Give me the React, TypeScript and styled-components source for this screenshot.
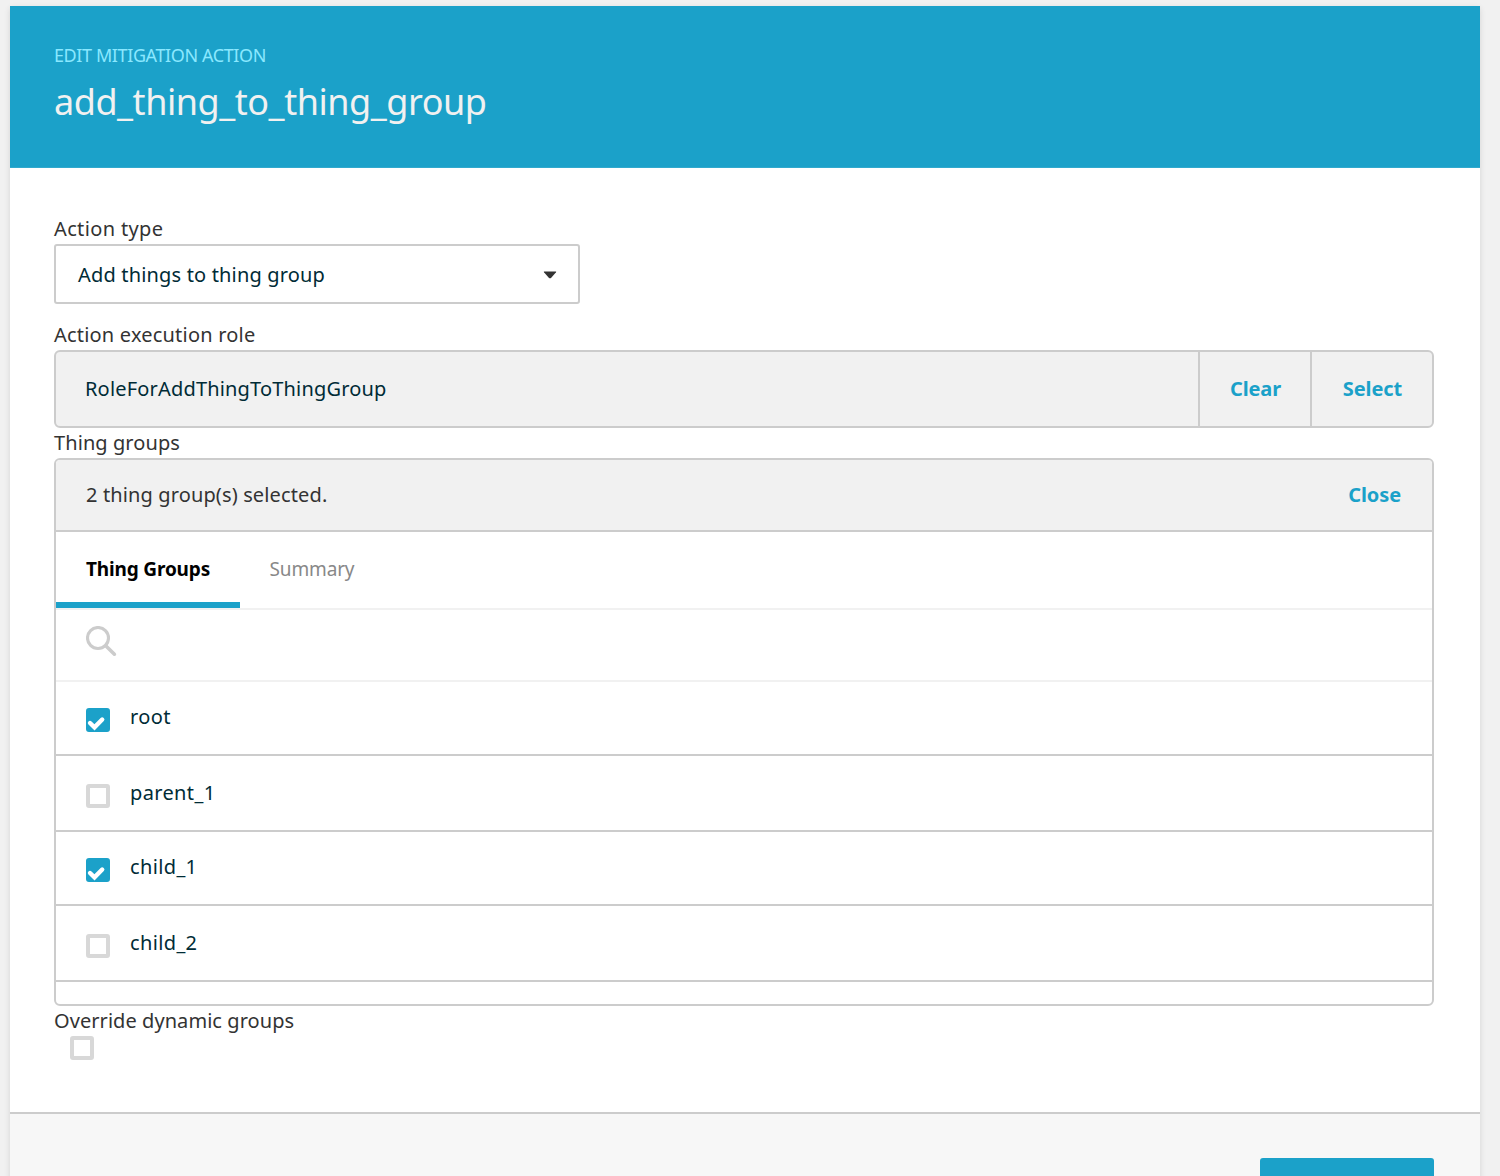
import styled, { createGlobalStyle } from 'styled-components';

const GlobalStyle = createGlobalStyle`
  * {
    box-sizing: border-box;
  }

  body {
    margin: 0;
    background: #f1f1f1;
    color: #333;
    font-family: 'Noto Sans', 'Open Sans', sans-serif;
    font-size: 20px;
    overflow: hidden;
  }

  h1,
  p,
  ul {
    margin: 0;
    padding: 0;
    list-style: none;
  }

  button {
    border: none;
    padding: 0;
    background: none;
    font-family: inherit;
    cursor: pointer;
  }
`;

const Page = styled.div`
  height: 1176px;
  padding: 6px 20px 0 10px;
  overflow: hidden;
`;

const Card = styled.main`
  display: flex;
  flex-direction: column;
  height: 1250px;
  background: #fff;
  box-shadow: 0 2px 6px rgba(0, 0, 0, 0.12);
`;

const Header = styled.header`
  height: 162px;
  padding: 36px 44px 0;
  background: #1ba1c9;
  border-bottom: 1px solid #31a9cd;
`;

const Eyebrow = styled.p`
  color: #8ae8ff;
  font-size: 18px;
  line-height: 26px;
  letter-spacing: -0.4px;
  text-transform: uppercase;
`;

const Title = styled.h1`
  margin-top: 7px;
  color: #f1f1f1;
  font-size: 36px;
  font-weight: 400;
  line-height: 54px;
  letter-spacing: -0.46px;
`;

const Body = styled.section`
  flex: none;
  height: 944px;
  padding: 46px 46px 0 44px;
`;

const Label = styled.p<{ $spacing?: number }>`
  height: 30px;
  line-height: 30px;
  letter-spacing: ${({ $spacing }) => $spacing ?? 0}px;
`;

const Text = styled.span<{ $spacing?: number }>`
  line-height: 30px;
  letter-spacing: ${({ $spacing }) => $spacing ?? 0}px;
`;

const Select = styled.div`
  display: flex;
  justify-content: space-between;
  align-items: center;
  width: 526px;
  height: 60px;
  margin-bottom: 16px;
  padding: 2px 21px 0 22px;
  border: 2px solid #ccc;
  border-radius: 3px;
  color: #002b36;
`;

const RoleBox = styled.div`
  display: flex;
  height: 78px;
  border: 2px solid #ccc;
  border-radius: 6px;
  background: #f1f1f1;
`;

const RoleName = styled.div`
  flex: 1;
  padding: 22px 30px 0 29px;
  color: #002b36;
`;

const LinkButton = styled.button`
  color: #1ba1c9;
  font-size: 20px;
  font-weight: 700;
  line-height: 30px;
  letter-spacing: -0.1px;
`;

const RoleButton = styled(LinkButton)<{ $width: number }>`
  width: ${({ $width }) => $width}px;
  padding-left: 1px;
  border-left: 2px solid #ccc;
`;

const Panel = styled.div`
  height: 548px;
  border: 2px solid #ccc;
  border-radius: 6px;
  overflow: hidden;
`;

const PanelHeader = styled.div`
  display: flex;
  justify-content: space-between;
  align-items: center;
  height: 72px;
  padding: 0 31px 0 30px;
  border-bottom: 2px solid #ccc;
  background: #f1f1f1;
`;

const Tabs = styled.div`
  display: flex;
  height: 78px;
  border-bottom: 2px solid #f1f1f1;
`;

const Tab = styled.button<{ $active?: boolean }>`
  width: ${({ $active }) => ($active ? 184 : 144)}px;
  height: 76px;
  padding-top: 4px;
  border-bottom: 6px solid ${({ $active }) => ($active ? '#1ba1c9' : 'transparent')};
  color: ${({ $active }) => ($active ? '#000' : '#888')};
  font-size: 19px;
  font-weight: ${({ $active }) => ($active ? 700 : 400)};
  letter-spacing: -0.15px;
`;

const SearchRow = styled.div`
  height: 72px;
  padding: 16px 30px 0;
  border-bottom: 2px solid #f1f1f1;

  svg {
    display: block;
  }
`;

const GroupRow = styled.li<{ $tall?: boolean }>`
  display: flex;
  align-items: flex-start;
  gap: 20px;
  height: ${({ $tall }) => ($tall ? 76 : 74)}px;
  padding: ${({ $tall }) => ($tall ? 22 : 20)}px 30px 0;
  border-bottom: 2px solid #ccc;
  color: #002b36;
`;

const Checkbox = styled.span<{ $checked?: boolean }>`
  display: block;
  width: 24px;
  height: 24px;
  border: 4px solid ${({ $checked }) => ($checked ? '#1ba1c9' : '#d8d8d8')};
  border-radius: 3px;
  background: ${({ $checked }) => ($checked ? '#1ba1c9' : '#fff')};

  ${GroupRow} & {
    margin-top: 6px;
  }

  svg {
    display: block;
    margin: -4px;
  }
`;

const OverrideRow = styled.div`
  padding-left: 16px;
`;

const Footer = styled.footer`
  flex: 1;
  display: flex;
  justify-content: flex-end;
  padding: 44px 46px 0 0;
  border-top: 2px solid #ccc;
  background: #f7f7f7;
`;

const SaveButton = styled.button`
  width: 174px;
  height: 60px;
  border-radius: 3px;
  background: #1ba1c9;
`;

const groups = [
  { name: 'root', checked: true },
  { name: 'parent_1', checked: false },
  { name: 'child_1', checked: true },
  { name: 'child_2', checked: false },
];

const CaretIcon = () => (
  <svg width="14" height="8" viewBox="0 0 14 8">
    <path d="M1.2 0.5h11.6q.8 0 .2.8L8 6.9q-1 .9-2 0L1 1.3Q.4.5 1.2.5z" fill="#333" />
  </svg>
);

const SearchIcon = () => (
  <svg width="32" height="32" viewBox="0 0 32 32" fill="none" stroke="#ccc">
    <circle cx="12" cy="12" r="10.5" strokeWidth="3.1" />
    <path d="M20 20l8.4 8.2" strokeWidth="3.6" strokeLinecap="round" />
  </svg>
);

const CheckIcon = () => (
  <svg width="24" height="24" viewBox="0 0 24 24">
    <path
      d="M4 15l4.5 4.4 7.7-7.9"
      fill="none"
      stroke="#fff"
      strokeWidth="4.4"
      strokeLinecap="round"
    />
  </svg>
);

const App = () => {
  return (
    <Page>
      <GlobalStyle />
      <Card>
        <Header>
          <Eyebrow>Edit mitigation action</Eyebrow>
          <Title>add_thing_to_thing_group</Title>
        </Header>
        <Body>
          <Label $spacing={0.36}>Action type</Label>
          <Select>
            <Text $spacing={0.17}>Add things to thing group</Text>
            <CaretIcon />
          </Select>
          <Label $spacing={0.2}>Action execution role</Label>
          <RoleBox>
            <RoleName>
              <Text $spacing={0.18}>RoleForAddThingToThingGroup</Text>
            </RoleName>
            <RoleButton $width={112}>Clear</RoleButton>
            <RoleButton $width={122}>Select</RoleButton>
          </RoleBox>
          <Label $spacing={0.08}>Thing groups</Label>
          <Panel>
            <PanelHeader>
              <Text $spacing={0.13}>2 thing group(s) selected.</Text>
              <LinkButton>Close</LinkButton>
            </PanelHeader>
            <Tabs>
              <Tab $active>Thing Groups</Tab>
              <Tab>Summary</Tab>
            </Tabs>
            <SearchRow>
              <SearchIcon />
            </SearchRow>
            <ul>
              {groups.map(({ name, checked }) => (
                <GroupRow key={name} $tall={!checked}>
                  <Checkbox $checked={checked}>{checked && <CheckIcon />}</Checkbox>
                  <Text $spacing={0.36}>{name}</Text>
                </GroupRow>
              ))}
            </ul>
          </Panel>
          <Label $spacing={0.06}>Override dynamic groups</Label>
          <OverrideRow>
            <Checkbox />
          </OverrideRow>
        </Body>
        <Footer>
          <SaveButton />
        </Footer>
      </Card>
    </Page>
  );
};

export default App;
